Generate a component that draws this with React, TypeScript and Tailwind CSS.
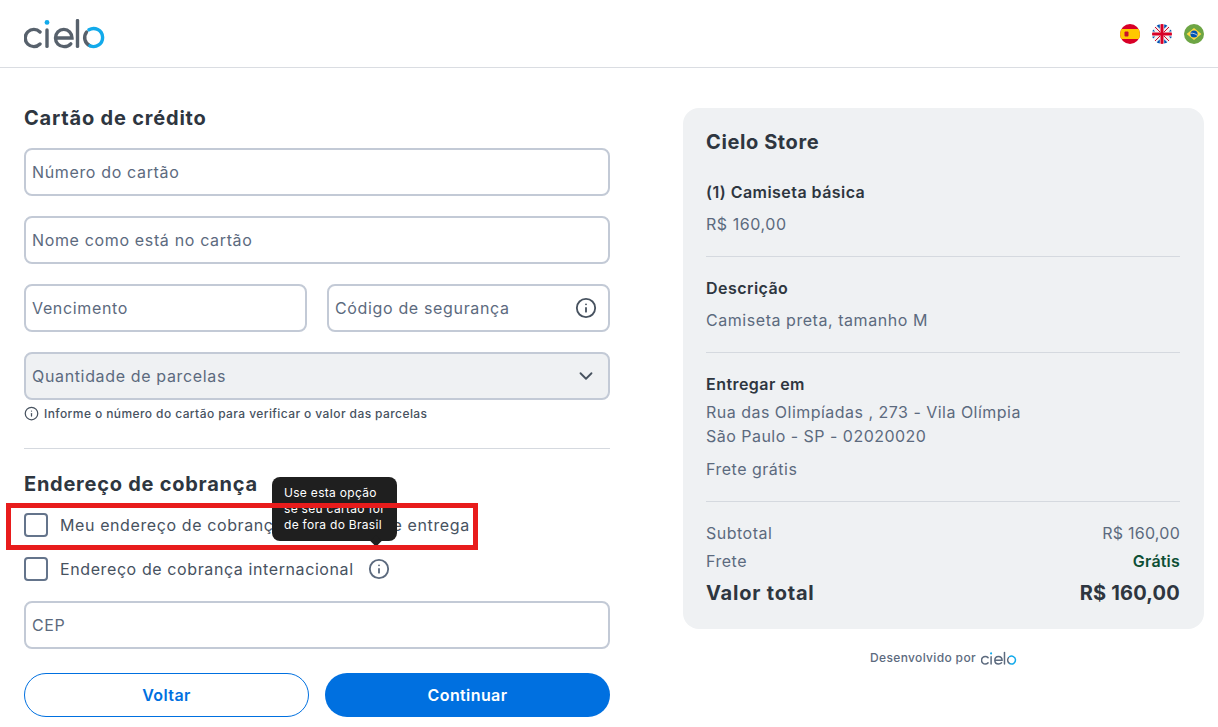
import { ChevronDown, Info } from 'lucide-react';

function CieloLogo({ className }: { className: string }) {
  return (
    <svg viewBox="0 0 82 30" className={className} fill="none" strokeLinecap="round" strokeWidth="3.4">
      <path d="M16 13 A8.6 8.6 0 1 0 16 25" stroke="currentColor" />
      <path d="M23 11 V27.4" stroke="currentColor" />
      <circle cx="23" cy="3.4" r="2.4" fill="#12aaeb" />
      <path
        d="M31.5 19 H48 C48 14 44.4 10.4 39.8 10.4 C35 10.4 31.5 14 31.5 19 C31.5 24 35 27.6 40 27.6 C43 27.6 45.2 26.6 46.8 24.8"
        stroke="currentColor"
      />
      <path d="M53.5 1.6 V27.4" stroke="currentColor" />
      <path d="M62.6 13 A9 9 0 0 0 66 26.8" stroke="currentColor" />
      <path d="M65 10.8 A9 9 0 1 1 66 26.8" stroke="#12aaeb" />
    </svg>
  );
}

function FlagEs() {
  return (
    <svg viewBox="0 0 20 20" className="h-5 w-5">
      <clipPath id="es"><circle cx="10" cy="10" r="10" /></clipPath>
      <g clipPath="url(#es)">
        <rect width="20" height="20" fill="#d80027" />
        <rect y="5" width="20" height="10" fill="#ffc800" />
        <rect x="4.5" y="7.5" width="4" height="5" rx="1" fill="#c8102e" />
      </g>
    </svg>
  );
}

function FlagUk() {
  return (
    <svg viewBox="0 0 20 20" className="h-5 w-5">
      <clipPath id="uk"><circle cx="10" cy="10" r="10" /></clipPath>
      <g clipPath="url(#uk)">
        <rect width="20" height="20" fill="#f0f0f0" />
        <path d="M3.5 0.5 L7.8 4.8 V0 Z M12.2 0 V4.8 L16.5 0.5 Z M20 4.5 L16.8 7.5 H20 Z M20 15.5 L16.8 12.5 H20 Z M16.5 19.5 L12.2 15.2 V20 Z M7.8 20 V15.2 L3.5 19.5 Z M0 15.5 L3.2 12.5 H0 Z M0 4.5 L3.2 7.5 H0 Z" fill="#0052b4" />
        <path d="M0 0 L8 8 M20 0 L12 8 M0 20 L8 12 M20 20 L12 12" stroke="#d80027" strokeWidth="1" />
        <rect x="8.5" width="3" height="20" fill="#d80027" />
        <rect y="8.5" width="20" height="3" fill="#d80027" />
      </g>
    </svg>
  );
}

function FlagBr() {
  return (
    <svg viewBox="0 0 20 20" className="h-5 w-5">
      <circle cx="10" cy="10" r="10" fill="#6da544" />
      <path d="M10 4 L17.4 10 L10 16 L2.6 10 Z" fill="#ffda44" />
      <circle cx="10" cy="10" r="3.6" fill="#0052b4" />
      <path d="M6.6 9.2 C9 9 11.6 9.8 13.3 11.4" stroke="#f0f0f0" strokeWidth="0.8" fill="none" />
    </svg>
  );
}

function Field({ label, className = '', children }: { label: string; className?: string; children?: React.ReactNode }) {
  return (
    <div className={`flex h-12 items-center justify-between rounded-lg border-2 border-[#c3cad6] pl-[6px] pr-[11px] ${className}`}>
      <span className="tracking-[0.65px] text-[#5c6a7e]">{label}</span>
      {children}
    </div>
  );
}

function Check({ label, children }: { label: string; children?: React.ReactNode }) {
  return (
    <div className="flex h-6 items-center">
      <span className="h-6 w-6 shrink-0 rounded border-2 border-[#64748b]" />
      <span className="ml-3 whitespace-nowrap tracking-[0.6px] text-[#47525f]">{label}</span>
      {children}
    </div>
  );
}

function Row({ label, value, valueClass }: { label: string; value: string; valueClass: string }) {
  return (
    <div className="flex h-7 items-center justify-between">
      <span className="tracking-[0.5px] text-[#5c6a7e]">{label}</span>
      <span className={valueClass}>{value}</span>
    </div>
  );
}

export default function App() {
  return (
    <div className="h-[727px] w-[1218px] overflow-hidden bg-white font-['Inter',sans-serif] text-base">
      <header className="flex h-[68px] items-center justify-between border-b border-[#dadde2] pl-6 pr-[14px]">
        <CieloLogo className="h-[30px] w-[82px] text-[#57616c]" />
        <div className="flex gap-3">
          <FlagEs />
          <FlagUk />
          <FlagBr />
        </div>
      </header>

      <main className="flex justify-between pl-6 pr-[14px]">
        <section className="relative w-[586px]">
          <h2 className="mt-[35px] h-[30px] text-xl leading-[30px] font-bold tracking-[0.8px] text-[#2e3640]">Cartão de crédito</h2>
          <div className="mt-[15px] flex flex-col gap-5">
            <Field label="Número do cartão" />
            <Field label="Nome como está no cartão" />
            <div className="flex justify-between">
              <Field label="Vencimento" className="w-[283px]" />
              <Field label="Código de segurança" className="w-[283px]">
                <Info className="h-[22px] w-[22px] text-[#47525f]" strokeWidth={2} />
              </Field>
            </div>
            <Field label="Quantidade de parcelas" className="bg-[#eff1f3]">
              <ChevronDown className="h-[22px] w-[22px] text-[#47525f]" strokeWidth={2} />
            </Field>
          </div>
          <div className="mt-[5px] flex h-[17px] items-center gap-[5px] text-xs font-medium tracking-[0.41px] text-[#47525f]">
            <Info className="h-[15px] w-[15px]" />
            <span>Informe o número do cartão para verificar o valor das parcelas</span>
          </div>
          <div className="mt-[26px] h-px bg-[#d5d9df]" />
          <h2 className="mt-5 h-[30px] text-xl leading-[30px] font-bold tracking-[0.75px] text-[#2e3640]">Endereço de cobrança</h2>
          <div className="mt-[14px] flex flex-col gap-5">
            <Check label="Meu endereço de cobrança é o mesmo de entrega" />
            <Check label="Endereço de cobrança internacional">
              <Info className="ml-[14px] h-[22px] w-[22px] text-[#5c6a7e]" />
            </Check>
          </div>
          <Field label="CEP" className="mt-5" />
          <div className="mt-6 flex gap-4">
            <button className="h-11 w-[285px] rounded-3xl border border-[#0070e0] font-semibold tracking-[0.4px] text-[#0070e0]">Voltar</button>
            <button className="h-11 w-[285px] rounded-3xl bg-[#0070e0] font-semibold tracking-[0.4px] text-white">Continuar</button>
          </div>

          {/* tooltip e destaque vermelho ficam por cima do conteudo */}
          <div className="absolute left-[248px] top-[409px] h-16 w-[125px] rounded-lg bg-[#1f1f1f] pl-3 pt-[8px] text-xs leading-4 tracking-[0.3px] text-white">
            <p>Use esta opção</p>
            <p>se seu cartão for</p>
            <p>de fora do Brasil</p>
            <span className="absolute left-[100px] top-[60px] h-2 w-2 rotate-45 bg-[#1f1f1f]" />
          </div>
          <div className="absolute left-[-18px] top-[435px] h-[47px] w-[472px] border-[5px] border-[#e81c1c]" />
        </section>

        <aside className="mt-10 w-[521px]">
          <div className="h-[521px] rounded-2xl bg-[#eff1f3] pl-[23px] pr-6 pt-[19px]">
            <h2 className="h-[30px] text-xl leading-[30px] font-bold tracking-[0.6px] text-[#2e3640]">Cielo Store</h2>
            <p className="mt-[21px] h-7 leading-7 font-semibold tracking-[0.45px] text-[#2e3640]">(1) Camiseta básica</p>
            <p className="mt-1 h-7 leading-7 tracking-[0.55px] text-[#5c6a7e]">R$ 160,00</p>
            <div className="mt-[18px] h-px bg-[#d5d9df]" />
            <p className="mt-[17px] h-7 leading-7 font-semibold tracking-[0.45px] text-[#2e3640]">Descrição</p>
            <p className="mt-1 h-7 leading-7 tracking-[0.55px] text-[#5c6a7e]">Camiseta preta, tamanho M</p>
            <div className="mt-[18px] h-px bg-[#d5d9df]" />
            <p className="mt-[17px] h-7 leading-7 font-semibold tracking-[0.45px] text-[#2e3640]">Entregar em</p>
            <p className="mt-[2px] leading-6 tracking-[0.48px] text-[#5c6a7e]">Rua das Olimpíadas , 273 - Vila Olímpia</p>
            <p className="leading-6 tracking-[0.48px] text-[#5c6a7e]">São Paulo - SP - 02020020</p>
            <p className="mt-[9px] h-6 leading-6 tracking-[0.5px] text-[#5c6a7e]">Frete grátis</p>
            <div className="mt-5 h-px bg-[#d5d9df]" />
            <div className="mt-[17px]">
              <Row label="Subtotal" value="R$ 160,00" valueClass="tracking-[0.25px] text-[#5c6a7e]" />
              <Row label="Frete" value="Grátis" valueClass="font-semibold tracking-[0.2px] text-[#0d4f35]" />
            </div>
            <div className="mt-1 flex h-7 items-center justify-between text-xl font-bold tracking-[0.8px] text-[#2e3640]">
              <span>Valor total</span>
              <span className="tracking-[0.2px]">R$ 160,00</span>
            </div>
          </div>
          <div className="mt-[21px] flex items-center justify-center gap-[5px] text-xs font-medium tracking-[0.35px] text-[#5c6a7e]">
            <span>Desenvolvido por</span>
            <CieloLogo className="h-[15px] w-[36px] text-[#5c6a7e]" />
          </div>
        </aside>
      </main>
    </div>
  );
}
